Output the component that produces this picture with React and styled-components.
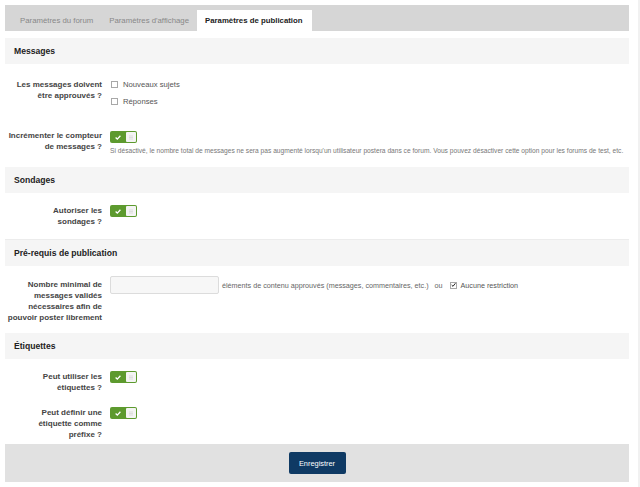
import styled, { createGlobalStyle } from "styled-components";

const Global = createGlobalStyle`
  html, body {
    margin: 0;
    padding: 0;
    background: #fff;
  }
  body {
    font-family: "Liberation Sans", Arial, sans-serif;
    color: #444;
  }
`;

const Page = styled.div`
  width: 640px;
  box-sizing: border-box;
  padding: 5px 9px 5px 5px;
  border-right: 2px solid #f1f1f1;
`;

const TabBar = styled.div`
  display: flex;
  align-items: flex-end;
  height: 26px;
  padding-left: 7px;
  background: #d6d6d6;
`;

const Tab = styled.div`
  height: 21px;
  display: flex;
  align-items: center;
  padding-left: 8px;
  padding-right: ${(p) => (p.$active ? "9px" : "8px")};
  font-size: 7.8px;
  color: ${(p) => (p.$active ? "#222" : "#888")};
  font-weight: ${(p) => (p.$active ? "bold" : "normal")};
  background: ${(p) => (p.$active ? "#fff" : "transparent")};
`;

const Section = styled.div`
  margin-top: ${(p) => p.$top || 0}px;
  border-bottom: ${(p) => (p.$line ? "1px solid #ececec" : "none")};
`;

const SectionHead = styled.div`
  height: 26px;
  display: flex;
  align-items: center;
  padding-left: 9px;
  background: #f5f5f5;
  font-size: 8.6px;
  font-weight: bold;
  color: #222;
`;

const SectionBody = styled.div`
  display: flex;
  flex-direction: column;
  gap: ${(p) => p.$gap || 14}px;
  padding: ${(p) => (p.$top ?? 12)}px 0 ${(p) => (p.$bottom ?? 12)}px;
`;

const Row = styled.div`
  display: grid;
  grid-template-columns: 97px 1fr;
  column-gap: 8px;
  align-items: start;
`;

const Label = styled.div`
  text-align: right;
  font-size: 8px;
  line-height: 11px;
  font-weight: bold;
  color: #444;
  padding-top: ${(p) => p.$pad || 0}px;
`;

const Control = styled.div`
  display: flex;
  flex-direction: column;
  align-items: flex-start;
`;

const Option = styled.label`
  display: flex;
  align-items: center;
  height: 17px;
  font-size: ${(p) => p.$size || 7.7}px;
  color: #555;
  gap: ${(p) => p.$gap || 5}px;
  padding-left: 1px;
`;

const Box = styled.span`
  width: 7px;
  height: 7px;
  box-sizing: border-box;
  border: 1px solid #a8a8a8;
  background: #fff;
  display: inline-flex;
  align-items: center;
  justify-content: center;
`;

const ToggleWrap = styled.div`
  width: 27px;
  height: 12px;
  margin-top: ${(p) => p.$mt || 0}px;
  display: flex;
  border-radius: 2px;
  background: #5d9a2e;
  box-sizing: border-box;
  overflow: hidden;
`;

const ToggleOn = styled.div`
  flex: 1;
  display: flex;
  align-items: center;
  justify-content: center;
`;

const Knob = styled.div`
  width: 10px;
  height: 10px;
  margin: 1px 1px 1px 0;
  background: #f4f4f4;
  border-radius: 1px;
  display: flex;
  align-items: center;
  justify-content: center;
`;

const Hint = styled.div`
  margin-top: 3px;
  font-size: 6.65px;
  line-height: 9px;
  color: #777;
  white-space: nowrap;
`;

const InlineLine = styled.div`
  display: flex;
  align-items: center;
  font-size: 7.2px;
  color: #666;
`;

const TextInput = styled.input`
  width: 109px;
  height: 18px;
  box-sizing: border-box;
  border: 1px solid #dcdcdc;
  border-radius: 2px;
  background: #f7f7f7;
  margin: 0 3px 0 0;
  padding: 0 4px;
  outline: none;
`;

const Or = styled.span`
  margin: 0 6px;
`;

const Footer = styled.div`
  height: 38px;
  display: flex;
  align-items: center;
  justify-content: center;
  background: #e1e1e1;
`;

const Button = styled.button`
  width: 57px;
  height: 22px;
  border: 0;
  border-radius: 2px;
  background: #0f3a64;
  color: #fff;
  font-family: "Liberation Sans", Arial, sans-serif;
  font-size: 7.4px;
  padding: 0;
`;

function Toggle({ mt }) {
  return (
    <ToggleWrap $mt={mt}>
      <ToggleOn>
        <svg width="6" height="5" viewBox="0 0 6 5">
          <path d="M0.6 2.6 L2.3 4.1 L5.4 0.8" stroke="#fff" strokeWidth="1.3" fill="none" />
        </svg>
      </ToggleOn>
      <Knob>
        <svg width="4" height="5" viewBox="0 0 4 5">
          <path d="M0 1h4M0 2.5h4M0 4h4" stroke="#cfcfcf" strokeWidth="0.6" />
        </svg>
      </Knob>
    </ToggleWrap>
  );
}

function Check({ checked }) {
  return (
    <Box>
      {checked && (
        <svg width="6" height="6" viewBox="0 0 6 6">
          <path d="M0.8 3 L2.4 4.6 L5.3 0.9" stroke="#222" strokeWidth="1.2" fill="none" />
        </svg>
      )}
    </Box>
  );
}

export default function App() {
  return (
    <>
      <Global />
      <Page>
        <TabBar>
          <Tab>Paramètres du forum</Tab>
          <Tab>Paramètres d'affichage</Tab>
          <Tab $active>Paramètres de publication</Tab>
        </TabBar>

        <Section $top={7}>
          <SectionHead>Messages</SectionHead>
          <SectionBody $gap={20}>
            <Row>
              <Label $pad={3}>
                Les messages doivent
                <br />
                être approuvés ?
              </Label>
              <Control>
                <Option>
                  <Check />
                  Nouveaux sujets
                </Option>
                <Option>
                  <Check />
                  Réponses
                </Option>
              </Control>
            </Row>
            <Row>
              <Label>
                Incrémenter le compteur
                <br />
                de messages ?
              </Label>
              <Control>
                <Toggle mt={1} />
                <Hint>
                  Si désactivé, le nombre total de messages ne sera pas augmenté lorsqu'un utilisateur postera dans ce
                  forum. Vous pouvez désactiver cette option pour les forums de test, etc.
                </Hint>
              </Control>
            </Row>
          </SectionBody>
        </Section>

        <Section $line>
          <SectionHead>Sondages</SectionHead>
          <SectionBody>
            <Row>
              <Label>
                Autoriser les
                <br />
                sondages ?
              </Label>
              <Control>
                <Toggle />
              </Control>
            </Row>
          </SectionBody>
        </Section>

        <Section>
          <SectionHead>Pré-requis de publication</SectionHead>
          <SectionBody $top={10} $bottom={10}>
            <Row>
              <Label $pad={3}>
                Nombre minimal de
                <br />
                messages validés
                <br />
                nécessaires afin de
                <br />
                pouvoir poster librement
              </Label>
              <Control>
                <InlineLine>
                  <TextInput type="text" />
                  éléments de contenu approuvés (messages, commentaires, etc.)
                  <Or>ou</Or>
                  <Option as="span" $size={7.2} $gap={4}>
                    <Check checked />
                    Aucune restriction
                  </Option>
                </InlineLine>
              </Control>
            </Row>
          </SectionBody>
        </Section>

        <Section>
          <SectionHead>Étiquettes</SectionHead>
          <SectionBody $gap={14} $bottom={4}>
            <Row>
              <Label>
                Peut utiliser les
                <br />
                étiquettes ?
              </Label>
              <Control>
                <Toggle />
              </Control>
            </Row>
            <Row>
              <Label>
                Peut définir une
                <br />
                étiquette comme
                <br />
                préfixe ?
              </Label>
              <Control>
                <Toggle />
              </Control>
            </Row>
          </SectionBody>
        </Section>

        <Footer>
          <Button>Enregistrer</Button>
        </Footer>
      </Page>
    </>
  );
}
